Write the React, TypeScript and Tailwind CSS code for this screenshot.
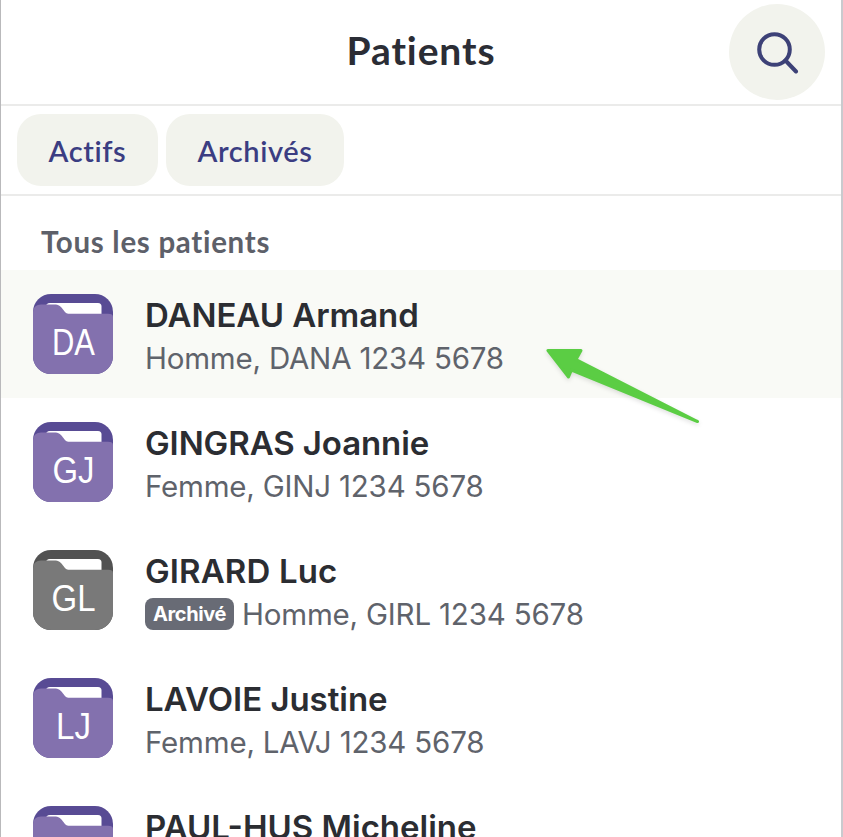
type Patient = {
  initials: string;
  name: string;
  info: string;
  nameSpacing: string;
  infoSpacing: string;
  initialsWidth: number;
  archived?: boolean;
  selected?: boolean;
};

const patients: Patient[] = [
  { initials: "DA", name: "DANEAU Armand", info: "Homme, DANA 1234 5678", nameSpacing: "tracking-[-0.05px]", infoSpacing: "tracking-[-0.2px]", initialsWidth: 43, selected: true },
  { initials: "GJ", name: "GINGRAS Joannie", info: "Femme, GINJ 1234 5678", nameSpacing: "tracking-[-0.1px]", infoSpacing: "tracking-[-0.2px]", initialsWidth: 42 },
  { initials: "GL", name: "GIRARD Luc", info: "Homme, GIRL 1234 5678", nameSpacing: "tracking-[0.12px]", infoSpacing: "tracking-[-0.18px]", initialsWidth: 44, archived: true },
  { initials: "LJ", name: "LAVOIE Justine", info: "Femme, LAVJ 1234 5678", nameSpacing: "tracking-[-0.05px]", infoSpacing: "tracking-[-0.18px]", initialsWidth: 35 },
  { initials: "PM", name: "PAUL-HUS Micheline", info: "Femme, PAUM 1234 5678", nameSpacing: "tracking-[0px]", infoSpacing: "tracking-[-0.2px]", initialsWidth: 46 },
];

function Folder({ initials, width, archived }: { initials: string; width: number; archived?: boolean }) {
  return (
    <svg viewBox="0 0 80 80" className="h-20 w-20 shrink-0 overflow-hidden rounded-[18px]">
      <rect width="80" height="80" fill={archived ? "#525252" : "#584b94"} />
      <path d="M13 12.500Q13 9 17 9H65Q68.500 9 68.500 12.500V24H13Z" fill="#fff" />
      <path
        d="M0 17Q1 10.500 8 10.500H21C26 10.500 27.500 12 30 15.500C32.500 18.500 33 19.700 36.500 19.700H75Q80 19.700 80 23V80H0Z"
        fill={archived ? "#797979" : "#8371ae"}
      />
      <text
        x="40.500"
        y="60.500"
        textAnchor="middle"
        textLength={width}
        lengthAdjust="spacingAndGlyphs"
        className="fill-white font-['Liberation_Sans',sans-serif] text-[36px]"
      >
        {initials}
      </text>
    </svg>
  );
}

function PatientRow({ patient }: { patient: Patient }) {
  return (
    <li className={`flex h-32 shrink-0 items-center gap-8 pl-8 ${patient.selected ? "bg-[#f9faf6]" : ""}`}>
      <Folder initials={patient.initials} width={patient.initialsWidth} archived={patient.archived} />
      <div className="pt-[3px] whitespace-nowrap font-['Inter',sans-serif]">
        <div className={`text-[33px] leading-[44px] font-semibold text-[#2b2d32] ${patient.nameSpacing}`}>{patient.name}</div>
        <div className="flex h-[42px] items-center gap-2 text-[#5f636b]">
          {patient.archived && (
            <span className="flex h-8 w-[89px] items-center justify-center rounded-lg bg-[#686b75] pt-px text-[20px] font-bold tracking-[-0.4px] text-white">
              Archivé
            </span>
          )}
          <span className={`pt-[2px] text-[29.500px] ${patient.infoSpacing}`}>{patient.info}</span>
        </div>
      </div>
    </li>
  );
}

export default function App() {
  return (
    <main className="relative flex h-[837px] w-[843px] flex-col overflow-hidden border-r-2 border-l border-r-[#c9cace] border-l-[#b9b9bb] bg-white font-['Lato',sans-serif]">
      <header className="grid h-[106px] shrink-0 grid-cols-[1fr_auto_1fr] items-center border-b-2 border-[#ebebea] px-4">
        <h1 className="col-start-2 pb-[3px] text-[39px] font-bold tracking-[0.900px] text-[#2b2d35]">Patients</h1>
        <button aria-label="Rechercher" className="flex h-24 w-24 items-center justify-center justify-self-end rounded-full bg-[#f2f3ed]">
          <svg viewBox="0 0 44 44" className="h-11 w-11" fill="none" stroke="#3d4177" strokeWidth="4" strokeLinecap="round">
            <circle cx="19.500" cy="19.500" r="15.300" />
            <path d="M30.500 30.500L41 41.500" />
          </svg>
        </button>
      </header>
      <nav className="flex h-[90px] shrink-0 items-center gap-2 border-b-2 border-[#ebebea] pl-4 text-[29px] font-semibold tracking-[0.600px] text-[#3b3d82]">
        <button className="h-[72px] w-[141px] rounded-[24px] bg-[#f2f3ed] pt-px">Actifs</button>
        <button className="h-[72px] w-[178px] rounded-[24px] bg-[#f2f3ed] pt-px">Archivés</button>
      </nav>
      <h2 className="h-[74px] shrink-0 pl-10 text-[29.500px] leading-[92px] font-bold tracking-[0.700px] text-[#5d6069]">Tous les patients</h2>
      <ul className="flex flex-col">
        {patients.map((patient) => (
          <PatientRow key={patient.name} patient={patient} />
        ))}
      </ul>
      <svg viewBox="0 0 160 80" className="absolute top-[345px] left-[542px] h-20 w-40 drop-shadow-[0_2px_2px_rgba(0,0,0,0.12)]">
        <path
          d="M5 5.500L38 5.500L33 14.500L154.500 76.500L28.500 25L25.500 32Z"
          fill="#5bcd44"
          stroke="#5bcd44"
          strokeWidth="3"
          strokeLinejoin="round"
        />
      </svg>
    </main>
  );
}
